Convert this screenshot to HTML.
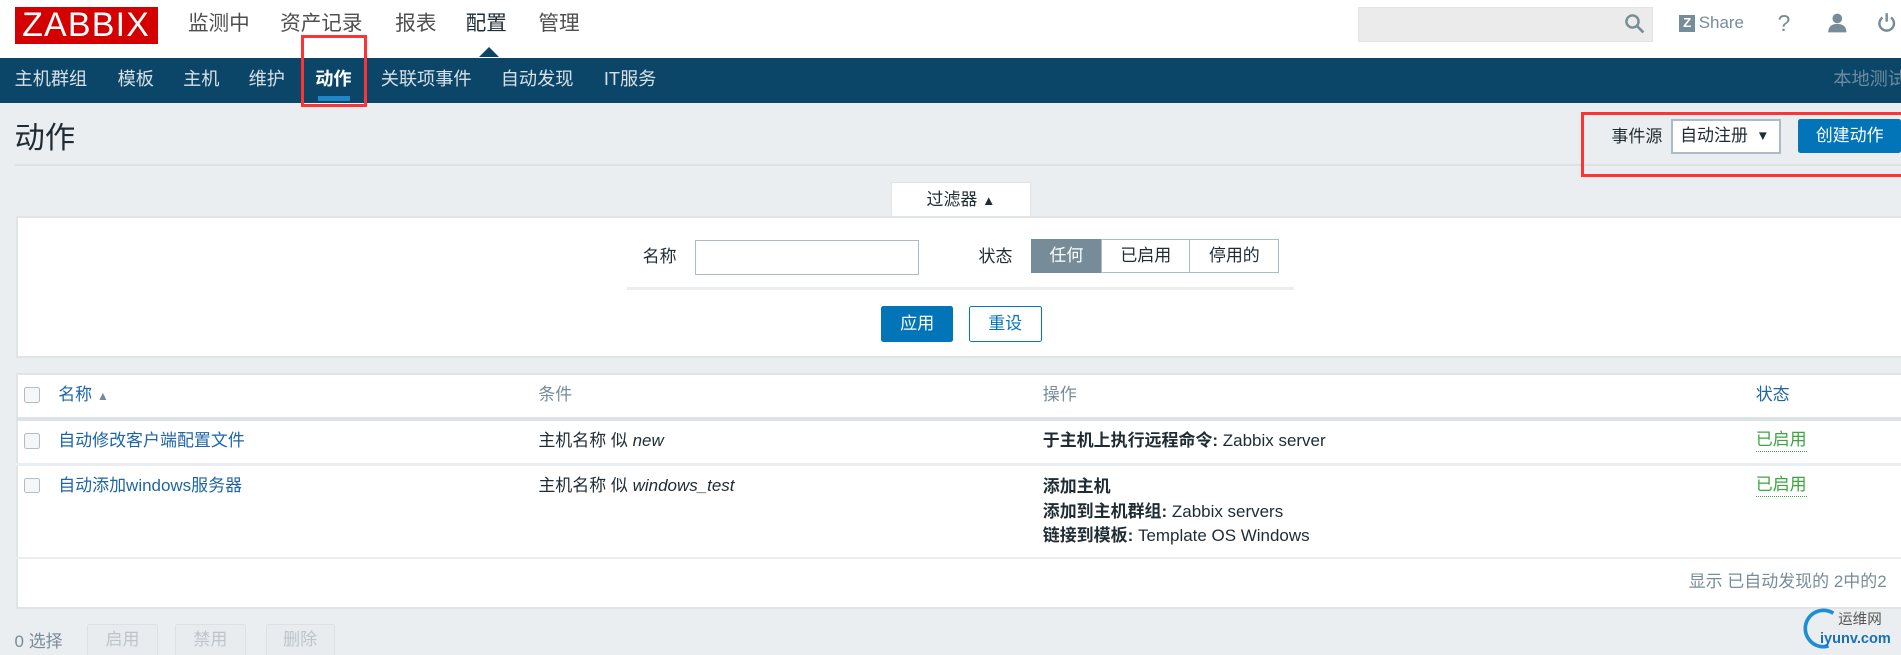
<!DOCTYPE html>
<html><head><meta charset="utf-8"><style>
*{box-sizing:border-box;margin:0;padding:0}
html,body{width:1901px;height:655px;overflow:hidden;background:#ebeef0}
#w{zoom:1.2125;width:1568px;height:541px;position:relative;font-family:"Liberation Sans","Noto Sans CJK SC",sans-serif;font-size:14px;color:#1f2c33}
.a{position:absolute;white-space:nowrap;line-height:18px}
.hdr{position:absolute;left:0;top:0;width:1568px;height:48px;background:#fff}
.logo{left:12px;top:6px;width:118px;height:30px;background:#d40000;color:#fff;font-size:28px;line-height:30px!important;text-align:center;letter-spacing:1px}
.tm{top:10px;font-size:17px;color:#4f4f4f;line-height:20px}
.nav{position:absolute;left:0;top:48px;width:1568px;height:37px;background:#0b4669}
.ni{top:57px;color:#d6e0e6;font-size:15px}
.red{position:absolute;border:3px solid #f33}
.btn{position:absolute;background:#0275b8;color:#fff;text-align:center;border-radius:2px}
.seg{position:absolute;top:197px;height:28px;border:1px solid #acbbc7;background:#fff;text-align:center;line-height:26px}
.th{top:317px;color:#768d99}
.cb{position:absolute;width:13px;height:13px;border:1px solid #b1bcc4;border-radius:2px;background:#f5f6f7}
.st{color:#3ea540;border-bottom:1px dotted #3ea540;line-height:17px!important}
.db{position:absolute;top:515px;height:26px;border:1px solid #dde1e4;background:#e9ecee;color:#bcc5cb;text-align:center;line-height:24px;border-radius:2px}
</style></head><body><div id="w">
<div class="hdr"></div>
<div class="a logo">ZABBIX</div>
<div class="a tm" style="left:155px">监测中</div>
<div class="a tm" style="left:231px">资产记录</div>
<div class="a tm" style="left:326px">报表</div>
<div class="a tm" style="left:384px;color:#1f2c33">配置</div>
<div class="a tm" style="left:444px">管理</div>
<div class="a" style="left:395px;top:39px;width:0;height:0;border-left:9px solid transparent;border-right:9px solid transparent;border-bottom:9px solid #0b4669"></div>
<div class="a" style="left:1120px;top:6px;width:243px;height:29px;background:#ebebeb;border:1px solid #e3e3e3"></div>
<svg class="a" style="left:1339px;top:11px" width="18" height="18" viewBox="0 0 18 18"><circle cx="7" cy="7" r="5" fill="none" stroke="#768d99" stroke-width="2"/><path d="M11 11l5 5" stroke="#768d99" stroke-width="2.2"/></svg>
<div class="a" style="left:1385px;top:12px;width:13px;height:14px;background:#768d99;color:#fff;font-size:11px;font-weight:bold;text-align:center;line-height:14px">Z</div>
<div class="a" style="left:1401px;top:10px;color:#768d99;font-size:14px">Share</div>
<div class="a" style="left:1466px;top:8px;color:#768d99;font-size:19px;line-height:22px">?</div>
<svg class="a" style="left:1507px;top:11px" width="17" height="16" viewBox="0 0 17 16"><circle cx="8.5" cy="4.5" r="4" fill="#768d99"/><path d="M1 16c0-5 3-7 7.5-7s7.5 2 7.5 7z" fill="#768d99"/></svg>
<svg class="a" style="left:1548px;top:10px" width="16" height="17" viewBox="0 0 16 17"><path d="M4.5 4.5A6 6 0 1 0 11.5 4.5" fill="none" stroke="#768d99" stroke-width="2"/><path d="M8 1v7" stroke="#768d99" stroke-width="2"/></svg>
<div class="nav"></div>
<div class="a ni" style="left:12px">主机群组</div>
<div class="a ni" style="left:97px">模板</div>
<div class="a ni" style="left:151px">主机</div>
<div class="a ni" style="left:205px">维护</div>
<div class="a ni" style="left:260px;color:#fff;font-weight:bold">动作</div>
<div class="a" style="left:262px;top:79px;width:27px;height:4px;background:#1e87c8"></div>
<div class="a ni" style="left:314px">关联项事件</div>
<div class="a ni" style="left:413px">自动发现</div>
<div class="a ni" style="left:498px">IT服务</div>
<div class="a ni" style="left:1512px;color:#6b8ca0">本地测试</div>
<div class="red" style="left:248px;top:29px;width:55px;height:59px"></div>
<div class="a" style="left:12px;top:100px;font-size:25px;line-height:30px;color:#1f2c33">动作</div>
<div class="a" style="left:12px;top:135px;width:1556px;height:2px;background:#dde1e4"></div>
<div class="a" style="left:1329px;top:104px;font-size:14px">事件源</div>
<div class="a" style="left:1378px;top:98px;width:91px;height:29px;background:#fff;border:2px solid #acbbc7;padding-left:6px;line-height:25px">自动注册<span style="position:absolute;right:8px;font-size:11px">▼</span></div>
<div class="btn" style="left:1483px;top:98px;width:85px;height:28px;line-height:28px">创建动作</div>
<div class="red" style="left:1304px;top:92px;width:266px;height:54px"></div>
<div class="a" style="left:735px;top:150px;width:115px;height:30px;background:#fff;border:1px solid #dfe4e7;border-bottom:none;text-align:center;line-height:28px">过滤器 <span style="font-size:11px">▲</span></div>
<div class="a" style="left:13px;top:178px;width:1556px;height:117px;background:#fff;border:2px solid #dfe4e7;border-right:none"></div>
<div class="a" style="left:530px;top:203px">名称</div>
<div class="a" style="left:573px;top:198px;width:185px;height:29px;border:1px solid #acbbc7;background:#fff"></div>
<div class="a" style="left:807px;top:203px">状态</div>
<div class="seg" style="left:850px;width:59px;background:#768d99;color:#fff;border-color:#768d99">任何</div>
<div class="seg" style="left:908px;width:74px">已启用</div>
<div class="seg" style="left:981px;width:74px">停用的</div>
<div class="a" style="left:517px;top:237px;width:550px;height:2px;background:#ebeef0"></div>
<div class="btn" style="left:727px;top:252px;width:59px;height:30px;line-height:30px">应用</div>
<div class="a" style="left:799px;top:252px;width:60px;height:30px;border:1px solid #0275b8;color:#0275b8;text-align:center;line-height:28px;border-radius:2px;background:#fff">重设</div>
<div class="a" style="left:13px;top:308px;width:1556px;height:194px;background:#fff;border:2px solid #dfe4e7;border-right:none"></div>
<div class="cb" style="left:20px;top:319px"></div>
<div class="a th" style="left:48px;color:#1f65a6">名称 <span style="font-size:10px;color:#768d99">▲</span></div>
<div class="a th" style="left:444px">条件</div>
<div class="a th" style="left:860px">操作</div>
<div class="a th" style="left:1448px;color:#1f65a6">状态</div>
<div class="a" style="left:13px;top:344px;width:1556px;height:3px;background:#dde2e5"></div>
<div class="cb" style="left:20px;top:357px"></div>
<div class="a" style="left:48px;top:355px;color:#1f65a6">自动修改客户端配置文件</div>
<div class="a" style="left:444px;top:355px">主机名称 似 <i>new</i></div>
<div class="a" style="left:860px;top:355px"><b>于主机上执行远程命令:</b> Zabbix server</div>
<div class="a st" style="left:1448px;top:355px">已启用</div>
<div class="a" style="left:13px;top:382px;width:1556px;height:2px;background:#ebeef0"></div>
<div class="cb" style="left:20px;top:394px"></div>
<div class="a" style="left:48px;top:392px;color:#1f65a6">自动添加windows服务器</div>
<div class="a" style="left:444px;top:392px">主机名称 似 <i>windows_test</i></div>
<div class="a" style="left:860px;top:392px;line-height:20px"><b>添加主机</b><br><b>添加到主机群组:</b> Zabbix servers<br><b>链接到模板:</b> Template OS Windows</div>
<div class="a st" style="left:1448px;top:392px">已启用</div>
<div class="a" style="left:13px;top:459px;width:1556px;height:2px;background:#ebeef0"></div>
<div class="a" style="right:12px;top:471px;color:#768d99">显示 已自动发现的 2中的2</div>
<div class="a" style="left:12px;top:520px;color:#768d99">0 选择</div>
<div class="db" style="left:72px;width:58px">启用</div>
<div class="db" style="left:144px;width:59px">禁用</div>
<div class="db" style="left:219px;width:57px">删除</div>
<svg class="a" style="left:1482px;top:500px" width="36" height="36" viewBox="0 0 36 36"><path d="M30 6A15 15 0 1 0 26 33" fill="none" stroke="#1a8fd6" stroke-width="3"/></svg>
<div class="a" style="left:1516px;top:505px;color:#555;font-size:12px;line-height:14px">运维网</div>
<div class="a" style="left:1501px;top:520px;color:#1a6fb5;font-size:12px;font-weight:bold;line-height:14px">iyunv.com</div>
</div></body></html>
